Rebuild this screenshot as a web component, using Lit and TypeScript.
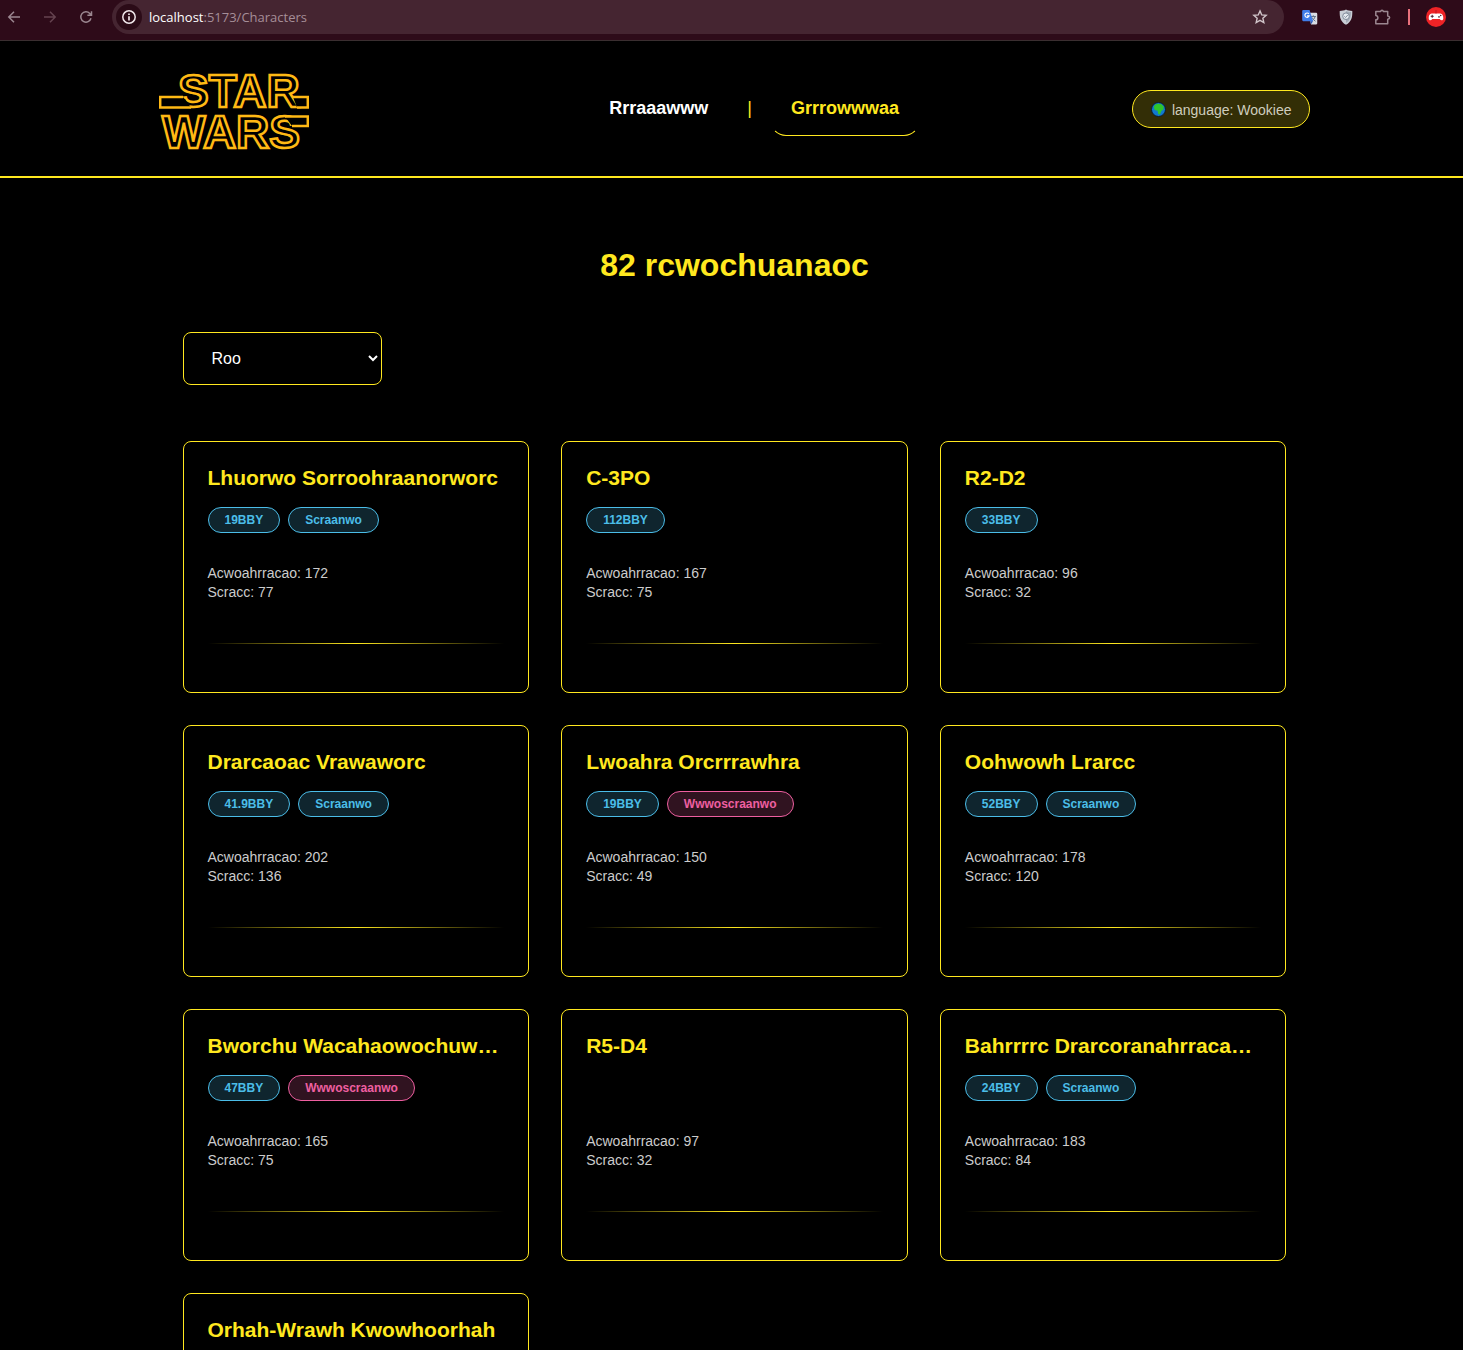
import { LitElement, html, css, nothing } from "lit";
import { customElement, property } from "lit/decorators.js";

interface Tag {
  text: string;
  tone: "blue" | "pink";
}

interface Character {
  name: string;
  tags: Tag[];
  height?: string;
  mass?: string;
}

const blue = (text: string): Tag => ({ text, tone: "blue" });
const pink = (text: string): Tag => ({ text, tone: "pink" });

const CHARACTERS: Character[] = [
  { name: "Lhuorwo Sorroohraanorworc", tags: [blue("19BBY"), blue("Scraanwo")], height: "172", mass: "77" },
  { name: "C-3PO", tags: [blue("112BBY")], height: "167", mass: "75" },
  { name: "R2-D2", tags: [blue("33BBY")], height: "96", mass: "32" },
  { name: "Drarcaoac Vrawaworc", tags: [blue("41.9BBY"), blue("Scraanwo")], height: "202", mass: "136" },
  { name: "Lwoahra Orcrrrawhra", tags: [blue("19BBY"), pink("Wwwoscraanwo")], height: "150", mass: "49" },
  { name: "Oohwowh Lrarcc", tags: [blue("52BBY"), blue("Scraanwo")], height: "178", mass: "120" },
  { name: "Bworchu Wacahaowochuwhuorwo", tags: [blue("47BBY"), pink("Wwwoscraanwo")], height: "165", mass: "75" },
  { name: "R5-D4", tags: [], height: "97", mass: "32" },
  { name: "Bahrrrrc Drarcoranahrracaoworc", tags: [blue("24BBY"), blue("Scraanwo")], height: "183", mass: "84" },
  { name: "Orhah-Wrawh Kwowhoorhah", tags: [] },
];

@customElement("browser-bar")
export class BrowserBar extends LitElement {
  static styles = css`
    :host {
      display: block;
    }
    .bar {
      display: flex;
      align-items: center;
      height: 34px;
      padding: 0 17px 6px 6px;
      background: #2e0b19;
      border-bottom: 1px solid #3a2e30;
      gap: 20px;
    }
    .icon {
      display: block;
      width: 16px;
      height: 16px;
      padding: 0;
      border: 0;
      background: none;
      color: #9b8790;
    }
    .icon svg {
      display: block;
    }
    .dim {
      color: #65434f;
    }
    .address {
      flex: 1;
      display: flex;
      align-items: center;
      gap: 7px;
      height: 34px;
      margin: 0 -2px;
      padding: 0 16px 0 4px;
      border-radius: 17px;
      background: #452531;
      font: 13px/18px "Open Sans", "Noto Sans", sans-serif;
      color: #a58e98;
    }
    .info {
      width: 26px;
      height: 26px;
      padding: 5px;
      box-sizing: border-box;
      border-radius: 13px;
      background: #2b0b17;
      color: #f0e6ea;
    }
    .url {
      flex: 1;
    }
    .host {
      color: #ffffff;
    }
    .star {
      color: #d0c4c9;
    }
    .nav {
      display: flex;
      gap: 20px;
    }
    .rule {
      width: 2px;
      height: 16px;
      margin: 0 -4px 0 -2px;
      background: #e8717c;
    }
    .avatar {
      width: 20px;
      height: 20px;
    }
  `;

  render() {
    return html`
      <div class="bar">
        <div class="nav">
          <button class="icon" aria-label="Back">
            <svg width="16" height="16" viewBox="0 0 16 16" fill="none" stroke="currentColor" stroke-width="1.5">
              <path d="M14 8H3M8 2.8 2.8 8 8 13.2" />
            </svg>
          </button>
          <button class="icon dim" aria-label="Forward">
            <svg width="16" height="16" viewBox="0 0 16 16" fill="none" stroke="currentColor" stroke-width="1.5">
              <path d="M2 8h11M8 2.8 13.2 8 8 13.2" />
            </svg>
          </button>
          <button class="icon" aria-label="Reload">
            <svg width="16" height="16" viewBox="0 0 16 16" fill="none" stroke="currentColor" stroke-width="1.5">
              <path d="M13 9.3A5.2 5.2 0 1 1 11.8 4.4L13.3 6M13.5 2.2V6.3H9.4" />
            </svg>
          </button>
        </div>
        <div class="address">
          <button class="icon info" aria-label="Site information">
            <svg width="16" height="16" viewBox="0 0 16 16" fill="none" stroke="currentColor" stroke-width="1.5">
              <circle cx="8" cy="8" r="6.2" />
              <path d="M8 7.2v4.2M8 4.4v1.6" stroke-width="1.7" />
            </svg>
          </button>
          <span class="url"><span class="host">localhost</span>:5173/Characters</span>
          <button class="icon star" aria-label="Bookmark">
            <svg width="16" height="16" viewBox="0 0 16 16" fill="none" stroke="currentColor" stroke-width="1.4">
              <path d="m8 1.9 1.75 4.05 4.4.4-3.3 2.9.97 4.3L8 11.3l-3.82 2.25.97-4.3-3.3-2.9 4.4-.4z" />
            </svg>
          </button>
        </div>
        <button class="icon" aria-label="Translate">
          <svg width="16" height="16" viewBox="0 0 17 17">
            <path d="M6.5 4H15a1.2 1.2 0 0 1 1.2 1.2V15A1.2 1.2 0 0 1 15 16.4H9.6z" fill="#d9dde3" />
            <path d="M9.5 8h5.3M12 6.7V8M13.8 8c-.4 2.4-2 3.8-3.6 4.8M10.7 9c.7 1.8 2 3 3.6 4" fill="none" stroke="#5f6f80" />
            <path d="M1.4 1H8l3.8 12H1.4A1.2 1.2 0 0 1 .2 11.8V2.2A1.2 1.2 0 0 1 1.4 1z" fill="#3f7de8" />
            <path d="m8.7 13 3.1 0-2.2 3.2z" fill="#2a56b8" />
            <path d="M7.3 5.3A2.3 2.3 0 1 0 7.6 7.3H5.3" fill="none" stroke="#fff" stroke-width="1.2" />
          </svg>
        </button>
        <button class="icon" aria-label="Shield">
          <svg width="16" height="16" viewBox="0 0 16 16">
            <path d="M8 .5c1.8 1 3.8 1.3 6.3 1.4.2 6.3-.9 11-6.3 13.8C2.6 12.9 1.5 8.2 1.7 1.9 4.2 1.8 6.2 1.5 8 .5z" fill="#c9ced6" />
            <path d="M8 2c1.5.7 3 1 5 1.1 0 5-.9 8.6-5 11z" fill="#a3abb7" />
            <circle cx="8" cy="7.2" r="3.3" fill="#e6eaf0" stroke="#7f8a99" />
            <path d="M6.3 7.3 7.6 8.5 9.8 6" fill="none" stroke="#8490a0" />
          </svg>
        </button>
        <button class="icon" aria-label="Extensions">
          <svg width="18" height="17" viewBox="0 0 18 17" fill="none" stroke="currentColor" stroke-width="1.5">
            <path d="M1.8 2.5H6.7C6.9.7 9.1.7 9.3 2.5H13.7V7C16.3 7.2 16.3 10 13.7 10.2V14.8H1.8V10.8C4.6 10.8 4.6 6.5 1.8 6.5z" stroke-linejoin="round" />
          </svg>
        </button>
        <span class="rule"></span>
        <button class="icon avatar" aria-label="Profile">
          <svg width="20" height="20" viewBox="0 0 20 20">
            <circle cx="10" cy="10" r="10" fill="#ee2326" />
            <path d="M5.6 6.5h8.8c2 0 3 2.5 2.9 4.9-.1 2.3-2.4 2.3-3.6.5H6.3c-1.2 1.8-3.5 1.8-3.6-.5C2.6 9 3.6 6.5 5.6 6.5z" fill="#fff" />
            <path d="M4.7 9.3h3M6.2 7.8v3" stroke="#4b2030" />
            <circle cx="13" cy="9.9" r=".8" fill="#4b2030" />
            <circle cx="14.7" cy="8.5" r=".8" fill="#4b2030" />
            <path d="M10 3v3.5" stroke="#c01820" />
          </svg>
        </button>
      </div>
    `;
  }
}

@customElement("site-header")
export class SiteHeader extends LitElement {
  static styles = css`
    :host {
      display: block;
      border-bottom: 2px solid #ffe81f;
    }
    .inner {
      display: flex;
      justify-content: space-between;
      align-items: center;
      box-sizing: border-box;
      max-width: 1200px;
      min-height: 135px;
      margin: 0 auto;
      padding: 0 24px;
    }
    .logo {
      display: block;
      padding: 8px 68px 0 0;
    }
    .logo svg {
      display: block;
    }
    .wordmark {
      font: bold 46px "Liberation Sans", Arial, sans-serif;
      fill: #000000;
      stroke: #ffb914;
      stroke-width: 2.5;
    }
    .nav {
      display: flex;
      align-items: center;
      gap: 18px;
      font-size: 18px;
      line-height: 20px;
      font-weight: bold;
    }
    .link {
      padding: 15px 20px 17px;
      border: 1px solid transparent;
      border-radius: 16px;
      color: #ffffff;
      text-decoration: none;
    }
    .active {
      color: #ffe81f;
      border-bottom-color: #ffe81f;
    }
    .bar {
      padding-bottom: 2px;
      color: #ffe81f;
      font-weight: normal;
    }
    .language {
      display: flex;
      align-items: center;
      gap: 6px;
      height: 38px;
      padding: 2px 18px 0;
      border: 1px solid #ffe81f;
      border-radius: 19px;
      background: #332e06;
      color: #cfcdbe;
      font: 14px/20px "Liberation Sans", Arial, sans-serif;
    }
  `;

  render() {
    return html`
      <header class="inner">
        <a class="logo" href="#" aria-label="Star Wars">
          <svg width="150" height="95" viewBox="0 -10 150 95">
            <text class="wordmark" x="19" y="32">STAR</text>
            <text class="wordmark" x="3" y="73">WARS</text>
            <g fill="#000000" stroke="#ffb914" stroke-width="2.5">
              <path d="M24 22H1.2V32.5H32" />
              <path d="M134 22H148.8V32.5H138" />
              <path d="M126 41.500H148.800V51H133" />
            </g>
          </svg>
        </a>
        <nav class="nav">
          <a class="link" href="#home">Rrraaawww</a>
          <span class="bar">|</span>
          <a class="link active" href="#characters">Grrrowwwaa</a>
        </nav>
        <button class="language">
          <svg width="15" height="15" viewBox="0 0 15 15">
            <circle cx="7.5" cy="7.5" r="7" fill="#1279cf" stroke="#0c1c2c" />
            <path d="M3.5 3.2 6 1.8 10 2 12.7 4.5 12.5 7.5 10.4 9 9 12.4 7.3 12.3 6.6 8.8 3.8 8 2.8 5.6z" fill="#2fc52b" />
          </svg>
          language: Wookiee
        </button>
      </header>
    `;
  }
}

@customElement("character-card")
export class CharacterCard extends LitElement {
  static styles = css`
    :host {
      display: block;
      min-width: 0;
    }
    .card {
      box-sizing: border-box;
      min-height: 252px;
      padding: 23px 24px;
      border: 1px solid #ffe81f;
      border-radius: 8px;
    }
    .name {
      margin: 0 0 17px;
      font-size: 21px;
      line-height: 25px;
      color: #ffe81f;
      overflow: hidden;
      white-space: nowrap;
      text-overflow: ellipsis;
    }
    .tags {
      display: flex;
      gap: 8px;
      height: 26px;
      margin-bottom: 31px;
    }
    .tag {
      padding: 0 16px;
      border: 1px solid;
      border-radius: 13px;
      font-size: 12px;
      line-height: 24px;
      font-weight: bold;
    }
    .blue {
      color: #4bbde8;
      background: #0f252e;
    }
    .pink {
      color: #ee5fa0;
      background: #301320;
    }
    .stats {
      font-size: 14px;
      line-height: 19px;
      color: #cccccc;
    }
    .line {
      height: 1px;
      margin: 41px 0 0;
      border: 0;
      background: linear-gradient(90deg, transparent, #ffe81f, transparent);
    }
  `;

  @property({ attribute: false }) character!: Character;

  render() {
    const c = this.character;
    return html`
      <article class="card">
        <h2 class="name">${c.name}</h2>
        <div class="tags">${c.tags.map((t) => html`<span class="tag ${t.tone}">${t.text}</span>`)}</div>
        ${c.height
          ? html`<div class="stats">
                <div>Acwoahrracao: ${c.height}</div>
                <div>Scracc: ${c.mass}</div>
              </div>
              <hr class="line" />`
          : nothing}
      </article>
    `;
  }
}

@customElement("app-root")
export class AppRoot extends LitElement {
  static styles = css`
    :host {
      display: block;
      height: 100vh;
      overflow: hidden;
      background: #000000;
      color: #ffffff;
      font-family: "Liberation Sans", Arial, sans-serif;
    }
    .header {
      padding-left: 6px;
    }
    .main {
      box-sizing: border-box;
      max-width: 1206px;
      margin: 0 auto;
      padding: 68px 48px 0 54px;
    }
    .title {
      margin: 0 0 48px;
      text-align: center;
      font-size: 32px;
      line-height: 38px;
      color: #ffe81f;
    }
    .filter {
      display: block;
      width: 199px;
      height: 53px;
      margin-bottom: 56px;
      padding: 0 0 0 24px;
      border: 1px solid #ffe81f;
      border-radius: 8px;
      background: #000000;
      color: #ffffff;
      font: 16px "Liberation Sans", Arial, sans-serif;
    }
    .grid {
      display: grid;
      grid-template-columns: repeat(3, minmax(0, 1fr));
      gap: 32px;
    }
  `;

  render() {
    return html`
      <browser-bar></browser-bar>
      <site-header class="header"></site-header>
      <main class="main">
        <h1 class="title">82 rcwochuanaoc</h1>
        <select class="filter" aria-label="Roo">
          <option>Roo</option>
        </select>
        <div class="grid">
          ${CHARACTERS.map((c) => html`<character-card .character=${c}></character-card>`)}
        </div>
      </main>
    `;
  }
}
